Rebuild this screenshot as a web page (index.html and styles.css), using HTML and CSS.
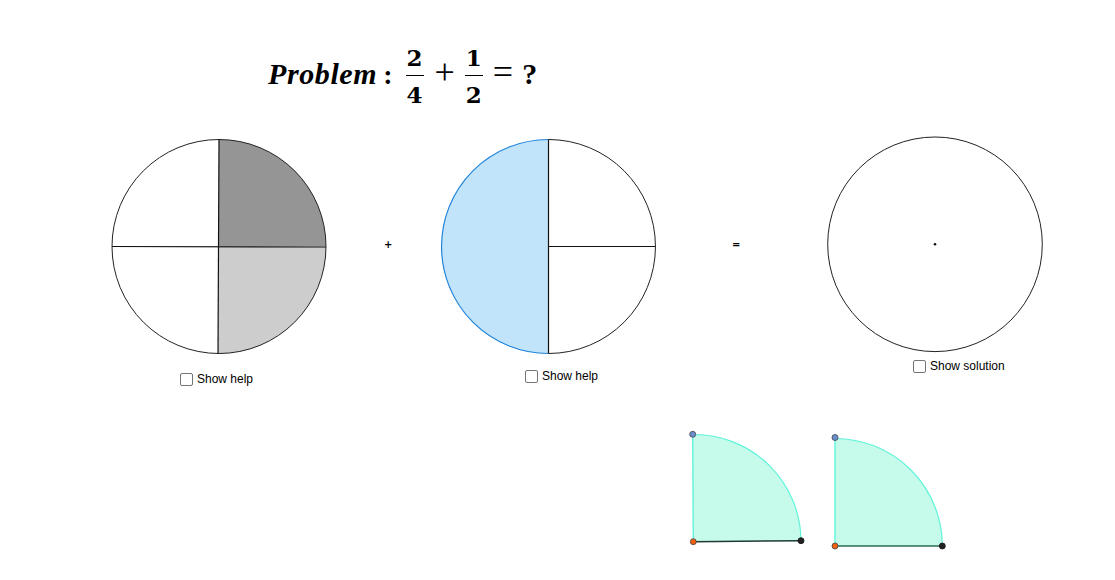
FILE: index.html
```html
<!DOCTYPE html>
<html>
<head>
<meta charset="utf-8">
<link rel="stylesheet" href="styles.css">
</head>
<body>
<div class="canvas">
  <svg class="drawing" width="1115" height="580" viewBox="0 0 1115 580">
    <!-- circle 1 -->
    <path d="M219 246.5 L219 139.5 A107 107 0 0 1 326 246.5 Z" fill="#959595"/>
    <path d="M219 246.5 L326 246.5 A107 107 0 0 1 218 353.5 Z" fill="#cdcdcd"/>
    <circle cx="219" cy="246.5" r="107" fill="none" stroke="#222" stroke-width="1"/>
    <line x1="219" y1="139.5" x2="218" y2="353.5" stroke="#111" stroke-width="1.2"/>
    <line x1="112" y1="246.5" x2="326" y2="247" stroke="#111" stroke-width="1.2"/>
    <!-- circle 2 -->
    <path d="M548.5 139.5 A107 107 0 0 0 548.5 353.5 Z" fill="#c2e4fb"/>
    <path d="M548.5 139.5 A107 107 0 0 1 548.5 353.5" fill="none" stroke="#222" stroke-width="1"/>
    <path d="M548.5 139.5 A107 107 0 0 0 548.5 353.5" fill="none" stroke="#1f83d8" stroke-width="1.2"/>
    <line x1="548.5" y1="139.5" x2="548.5" y2="353.5" stroke="#111" stroke-width="1.2"/>
    <line x1="548.5" y1="246.5" x2="655.5" y2="246.5" stroke="#111" stroke-width="1.2"/>
    <!-- circle 3 -->
    <circle cx="935" cy="244.3" r="107.3" fill="none" stroke="#222" stroke-width="1"/>
    <circle cx="935" cy="244.3" r="1.3" fill="#111"/>
    <!-- sector 1 -->
    <path d="M693.3 541.7 L692.7 434.5 A107 107 0 0 1 801 540.7 Z" fill="#c6fbeb"/>
    <path d="M692.7 434.5 A107 107 0 0 1 801 540.7" fill="none" stroke="#5ff3da" stroke-width="1.2"/>
    <line x1="693.3" y1="541.7" x2="692.7" y2="434.5" stroke="#5ff3da" stroke-width="1.4"/>
    <line x1="693.3" y1="541.7" x2="801" y2="540.7" stroke="#1e3a33" stroke-width="1.4"/>
    <circle cx="692.7" cy="434.3" r="3" fill="#6a8fcf" stroke="#444" stroke-width="0.8"/>
    <circle cx="693.3" cy="541.7" r="3" fill="#f06010" stroke="#444" stroke-width="0.8"/>
    <circle cx="801" cy="540.7" r="3" fill="#222" stroke="#111" stroke-width="0.8"/>
    <!-- sector 2 -->
    <path d="M835 546 L835 438.5 A107.5 107.5 0 0 1 942.3 546 Z" fill="#c6fbeb"/>
    <path d="M835 438.5 A107.3 107.3 0 0 1 942.3 546" fill="none" stroke="#5ff3da" stroke-width="1.2"/>
    <line x1="835" y1="546" x2="835" y2="438" stroke="#5ff3da" stroke-width="1.4"/>
    <line x1="835" y1="546" x2="942.3" y2="546" stroke="#2a6b58" stroke-width="1.6"/>
    <circle cx="835" cy="437.5" r="3" fill="#6a8fcf" stroke="#444" stroke-width="0.8"/>
    <circle cx="835" cy="546" r="3" fill="#f06010" stroke="#444" stroke-width="0.8"/>
    <circle cx="942.3" cy="546" r="3" fill="#222" stroke="#111" stroke-width="0.8"/>
  </svg>

  <div class="title"><span class="word">Problem</span><span class="colon">:</span><span class="frac frac-a"><span class="num">2</span><span class="den">4</span></span><span class="op plus-op">+</span><span class="frac frac-b"><span class="num">1</span><span class="den">2</span></span><span class="op eq-op">=</span><span class="q">?</span></div>

  <span class="sign plus">+</span>
  <span class="sign equals">=</span>

  <label class="check check-1"><span class="box"></span>Show help</label>
  <label class="check check-2"><span class="box"></span>Show help</label>
  <label class="check check-3"><span class="box"></span>Show solution</label>
</div>
</body>
</html>
```

FILE: styles.css
```css
html, body {
  margin: 0;
  padding: 0;
  background: #fff;
}

.canvas {
  position: relative;
  width: 1115px;
  height: 580px;
  overflow: hidden;
  background: #fff;
  font-family: "Liberation Sans", Arial, sans-serif;
}

.drawing {
  position: absolute;
  left: 0;
  top: 0;
}

/* title set as one line of inline math; baseline at y=85 */
.title {
  position: absolute;
  left: 268px;
  top: 46px;
  white-space: nowrap;
  font-family: "Liberation Serif", "DejaVu Serif", serif;
  font-weight: bold;
  font-size: 30px;
  line-height: 40px;
  height: 40px;
  color: #000;
}

.word {
  font-style: italic;
  letter-spacing: 0.6px;
}

.colon {
  display: inline-block;
  margin-left: 6px;
  font-size: 28px;
}

.frac {
  display: inline-block;
  vertical-align: -19px;
  text-align: center;
  font-family: "DejaVu Serif", serif;
  font-size: 23px;
  line-height: 23px;
}

.frac-a { margin-left: 13px; }
.frac-b { margin-left: 10px; }

.num {
  display: block;
  padding: 0 1px 6px;
  border-bottom: 1.5px solid #000;
}

.den {
  display: block;
  padding-top: 7px;
}

.op {
  display: inline-block;
  font-weight: normal;
  font-size: 36px;
}

.plus-op { margin-left: 11px; }
.eq-op { margin-left: 10px; }

.q {
  display: inline-block;
  margin-left: 9px;
  font-size: 30px;
}

.sign {
  position: absolute;
  font-family: "DejaVu Sans", sans-serif;
  font-weight: bold;
  font-size: 10px;
  line-height: 10px;
  color: #000;
}

.plus { left: 384px; top: 240px; }
.equals { left: 732px; top: 240px; }

.check {
  position: absolute;
  display: flex;
  align-items: center;
  gap: 4px;
  font-size: 12px;
  color: #000;
  line-height: 14px;
}

.box {
  width: 11px;
  height: 11px;
  border: 1.5px solid #757575;
  border-radius: 2px;
  background: #fff;
}

.check-1 { left: 180px; top: 372px; }
.check-2 { left: 525px; top: 369px; }
.check-3 { left: 913px; top: 359px; }
```
